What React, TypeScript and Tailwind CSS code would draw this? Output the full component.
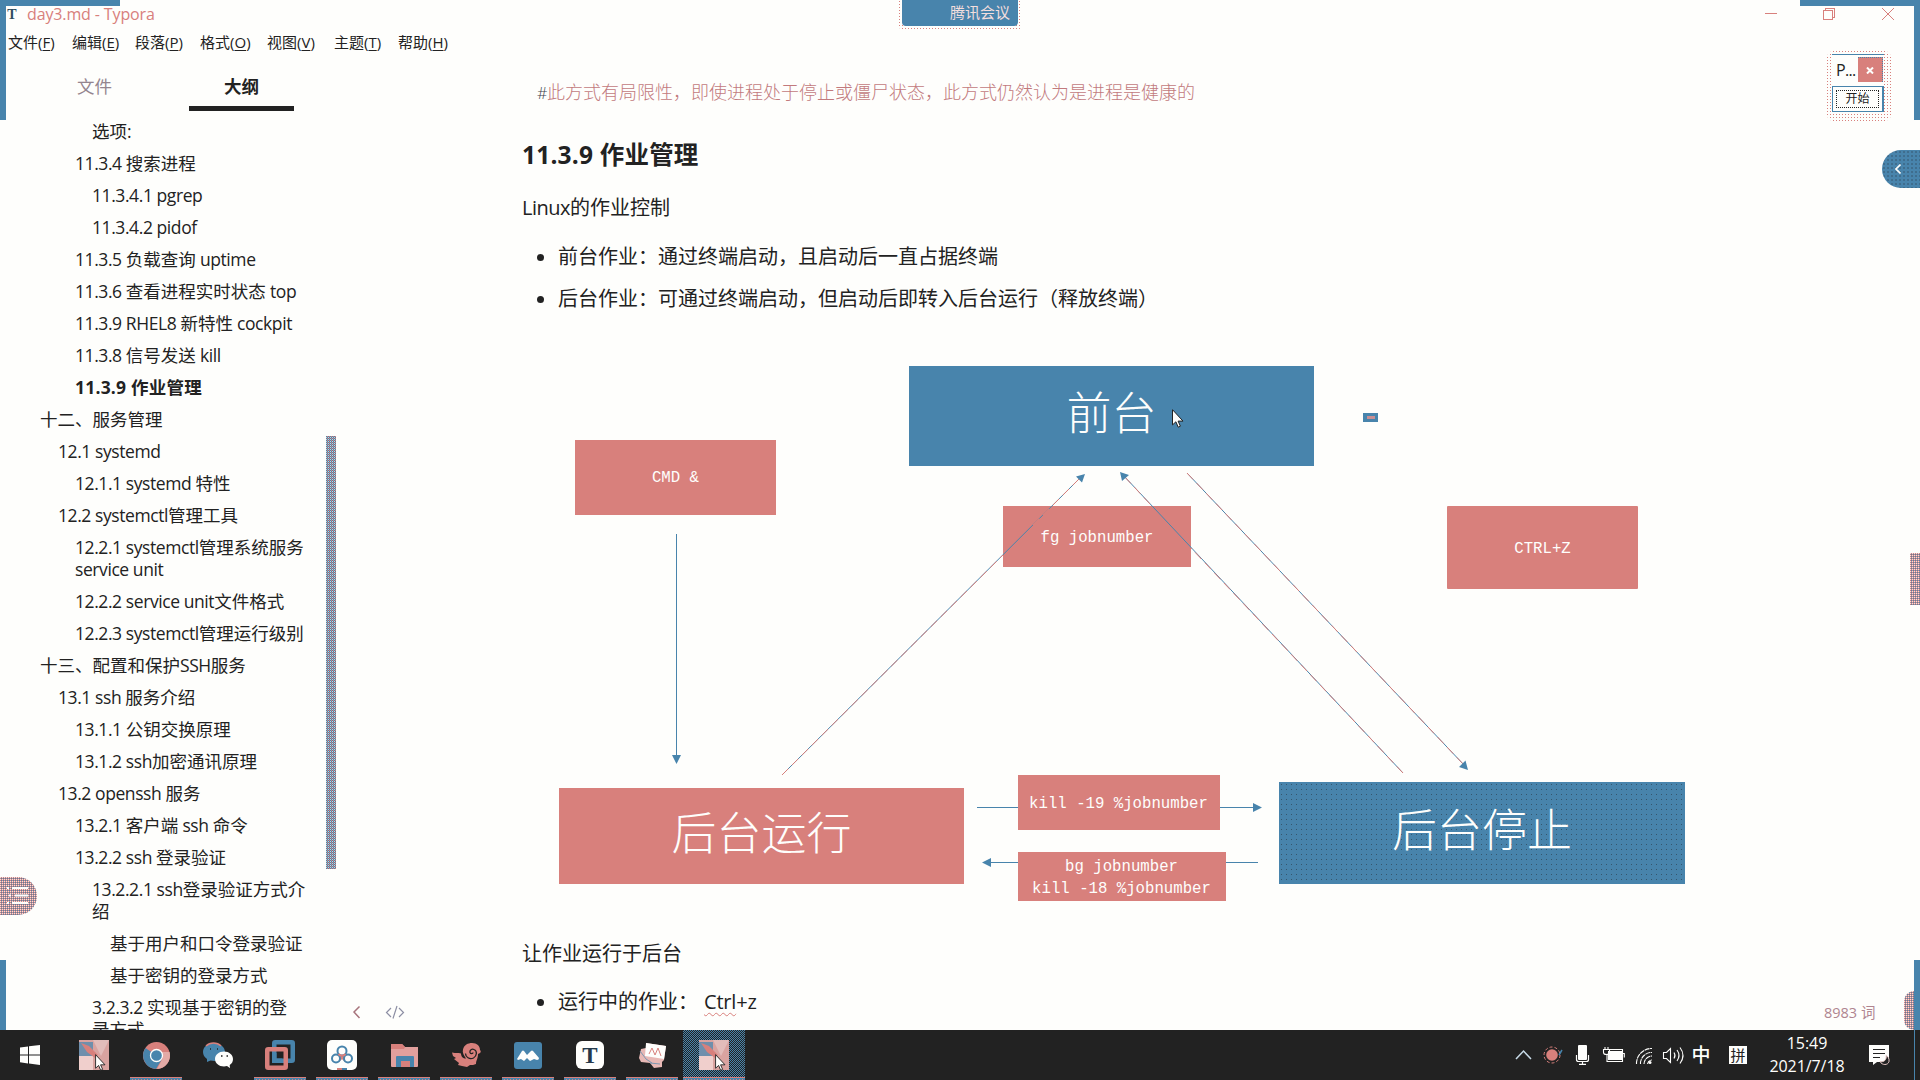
import React from "react";

/* Latin runs are set slightly tighter than the CJK runs around them. */
function Mixed({ text }: { text: string }) {
  const runs = text.match(/[\u3000-\uffff]+|[^\u3000-\uffff]+/g) ?? [];
  return (
    <>
      {runs.map((r, i) =>
        /[\u3000-\uffff]/.test(r) ? (
          <React.Fragment key={i}>{r}</React.Fragment>
        ) : (
          <span key={i} className="tracking-[-0.024em]">
            {r}
          </span>
        )
      )}
    </>
  );
}

const indent = ["pl-[40px]", "pl-[58px]", "pl-[75px]", "pl-[92px]", "pl-[110px]"];

const outline: { level: number; lines: string[]; active?: boolean }[] = [
  { level: 3, lines: ["选项:"] },
  { level: 2, lines: ["11.3.4 搜索进程"] },
  { level: 3, lines: ["11.3.4.1 pgrep"] },
  { level: 3, lines: ["11.3.4.2 pidof"] },
  { level: 2, lines: ["11.3.5 负载查询 uptime"] },
  { level: 2, lines: ["11.3.6 查看进程实时状态 top"] },
  { level: 2, lines: ["11.3.9 RHEL8 新特性 cockpit"] },
  { level: 2, lines: ["11.3.8 信号发送 kill"] },
  { level: 2, lines: ["11.3.9 作业管理"], active: true },
  { level: 0, lines: ["十二、服务管理"] },
  { level: 1, lines: ["12.1 systemd"] },
  { level: 2, lines: ["12.1.1 systemd 特性"] },
  { level: 1, lines: ["12.2 systemctl管理工具"] },
  { level: 2, lines: ["12.2.1 systemctl管理系统服务", "service unit"] },
  { level: 2, lines: ["12.2.2 service unit文件格式"] },
  { level: 2, lines: ["12.2.3 systemctl管理运行级别"] },
  { level: 0, lines: ["十三、配置和保护SSH服务"] },
  { level: 1, lines: ["13.1 ssh 服务介绍"] },
  { level: 2, lines: ["13.1.1 公钥交换原理"] },
  { level: 2, lines: ["13.1.2 ssh加密通讯原理"] },
  { level: 1, lines: ["13.2 openssh 服务"] },
  { level: 2, lines: ["13.2.1 客户端 ssh 命令"] },
  { level: 2, lines: ["13.2.2 ssh 登录验证"] },
  { level: 3, lines: ["13.2.2.1 ssh登录验证方式介", "绍"] },
  { level: 4, lines: ["基于用户和口令登录验证"] },
  { level: 4, lines: ["基于密钥的登录方式"] },
  { level: 3, lines: ["3.2.3.2 实现基于密钥的登", "录方式"] },
];

const menus = [
  { name: "文件", key: "F", w: "w-[64px]" },
  { name: "编辑", key: "E", w: "w-[63px]" },
  { name: "段落", key: "P", w: "w-[65px]" },
  { name: "格式", key: "O", w: "w-[67px]" },
  { name: "视图", key: "V", w: "w-[67px]" },
  { name: "主题", key: "T", w: "w-[64px]" },
  { name: "帮助", key: "H", w: "w-[64px]" },
];

const Pointer = ({ className }: { className: string }) => (
  <svg viewBox="0 0 12 19" className={className}>
    <path d="M.5.7v15.2l3.4-3.1 2.3 5.4 2.2-1-2.3-5.1h4.9z" fill="#fefefc" stroke="#222" strokeWidth="1" />
  </svg>
);

function TitleBar() {
  return (
    <div className="flex h-[29px] items-center text-[#d8807c]">
      <span className="ml-[7px] w-[10px] text-center font-['Liberation_Serif'] text-[14px] font-bold leading-[26px] text-[#2f4c60]">T</span>
      <span className="ml-[10px] text-[16px] leading-[29px] tracking-[-0.008em]">day3.md - Typora</span>
      <svg viewBox="0 0 140 20" className="ml-auto mr-[20px] h-[20px] w-[140px] -translate-y-px" fill="none" stroke="#d8807c" shapeRendering="crispEdges">
        <path d="M5 9.5h12M63.5 6.500h9v9h-9zM65.500 6V4.500h9v9H73" />
        <path d="M122 4l12 12M134 4l-12 12" shapeRendering="auto" />
      </svg>
    </div>
  );
}

function MenuBar() {
  return (
    <div className="flex h-[26px] items-center pl-[8px] text-[15px] leading-[26px]">
      {menus.map((m) => (
        <span key={m.key} className={m.w + " whitespace-nowrap"}>
          {m.name}
          <span>
            (<u className="underline-offset-2">{m.key}</u>)
          </span>
        </span>
      ))}
    </div>
  );
}

function Sidebar() {
  return (
    <aside className="flex h-full w-[337px] shrink-0 flex-col text-[17.500px]">
      <div className="flex h-[56px] shrink-0 leading-[62px]">
        <div className="w-[189px] pl-[77px] text-[#94858f]">文件</div>
        <div className="w-[105px] border-b-[5px] border-[#222] text-center font-bold">大纲</div>
      </div>
      <div className="flex min-h-0 flex-1">
        <div className="w-[326px] overflow-hidden pt-[4px]">
          {outline.map((o, i) => (
            <div key={i} className={indent[o.level] + " whitespace-nowrap py-[5px] leading-[22px]" + (o.active ? " font-bold tracking-[0.012em]" : "")}>
              {o.lines.map((l) => (
                <div key={l}>{o.active ? l : <Mixed text={l} />}</div>
              ))}
            </div>
          ))}
        </div>
        <div className="mt-[325px] h-[433px] w-[10px] bg-[conic-gradient(#d8807c_25%,#4884ac_0_50%,#d0cfd2_0_75%,#4884ac_0)] bg-[length:2px_2px]" />
      </div>
    </aside>
  );
}

const nodeBase = "absolute flex flex-col items-center justify-center whitespace-pre text-[#fefefc] ";
const small = "font-['Liberation_Mono',monospace] text-[15.700px] leading-[22px] pt-[2px] ";
const big = "text-[45px] font-light leading-[60px] ";

function Diagram() {
  return (
    <div className="relative h-[590px] w-[1200px]">
      <div className={nodeBase + big + "left-[386px] top-[46px] h-[100px] w-[405px] bg-[#4884ac] pb-[6px]"}>前台</div>
      <div className={nodeBase + small + "left-[52px] top-[120px] h-[75px] w-[201px] bg-[#d8807c] pb-[2px]"}>CMD &amp;</div>
      <div className={nodeBase + small + "left-[480px] top-[186px] h-[61px] w-[188px] bg-[#d8807c]"}>fg jobnumber</div>
      <div className={nodeBase + small + "left-[924px] top-[186px] h-[83px] w-[191px] rounded-[1px] bg-[#d8807c]"}>CTRL+Z</div>
      <div className={nodeBase + big + "left-[36px] top-[468px] h-[96px] w-[405px] bg-[#d8807c] pb-[6px]"}>后台运行</div>
      <div className={nodeBase + small + "left-[495px] top-[455px] h-[55px] w-[202px] bg-[#d8807c] pr-px"}>kill -19 %jobnumber</div>
      <div className={nodeBase + small + "left-[495px] top-[532px] h-[49px] w-[208px] bg-[#d8807c] pr-px"}>
        <span>bg jobnumber</span>
        <span>kill -18 %jobnumber</span>
      </div>
      <div
        className={
          nodeBase + big +
          "left-[756px] top-[462px] h-[102px] w-[406px] bg-[#4884ac] bg-[radial-gradient(circle_at_center,#35566c_0.5px,transparent_0.8px)] bg-[length:5px_5px] pb-[6px]"
        }
      >
        后台停止
      </div>
      <div className="absolute left-[840px] top-[93px] flex h-[9px] w-[15px] items-center justify-center bg-[#4884ac]">
        <div className="h-[3px] w-[8px] bg-[#c98f93]" />
      </div>
      <svg viewBox="523 320 1200 590" className="absolute inset-0 h-[590px] w-[1200px]" fill="none" stroke="#4884ac">
        <path d="M676.500 534V756M977 807.500h41M1220 807.500h34M1226 862.500h32M990 862.500h28" />
        <path d="M782 775L1081 477M1403 773L1123 475M1187 473L1465 766" />
        <path d="M782 775L1003 555M1033 525L1081 477M1403 773L1191 548M1150 504L1123 475M1187 473L1465 766" stroke="#d8807c" strokeDasharray="9 5" />
        <g fill="#4884ac" stroke="none">
          <path d="M672 755h9l-4.500 9zM1253 803v9l9-4.500zM991 858v9l-9-4.500z" />
          <path d="M1085 474l-9 2.500 6 6zM1120 472l2 9 7-6zM1468 770l-9-3 6.500-6.500z" />
        </g>
      </svg>
      <Pointer className="absolute left-[649px] top-[89px] h-[19px] w-[12px]" />
    </div>
  );
}

function Bullet({ children }: { children: React.ReactNode }) {
  return (
    <li className="flex h-[42px] items-center">
      <span className="ml-[15px] mr-[14px] h-[7px] w-[7px] rounded-full bg-[#222]" />
      <span className="whitespace-pre">{children}</span>
    </li>
  );
}

function Article() {
  return (
    <main className="h-full flex-1 overflow-hidden pl-[185px] text-[20px]">
      <div className="mt-[17px] h-[40px] pl-[15px] text-[18px] font-light leading-[40px] text-[#c27a7d]">
        <span className="inline-block w-[10px] text-[16px] text-[#3c3f4c]">#</span>
        此方式有局限性，即使进程处于停止或僵尸状态，此方式仍然认为是进程是健康的
      </div>
      <h4 className="mt-[22px] h-[42px] text-[24.500px] font-bold leading-[42px] tracking-[0.008em]">11.3.9 作业管理</h4>
      <p className="mt-[16px] h-[32px] leading-[32px]">
        <Mixed text="Linux的作业控制" />
      </p>
      <ul className="mt-[12px]">
        <Bullet>前台作业：通过终端启动，且启动后一直占据终端</Bullet>
        <Bullet>后台作业：可通过终端启动，但启动后即转入后台运行（释放终端）</Bullet>
      </ul>
      <div className="pl-px">
        <Diagram />
      </div>
      <p className="mt-[28px] h-[32px] leading-[32px]">让作业运行于后台</p>
      <ul className="mt-[11px]">
        <Bullet>
          运行中的作业：
          <span className="ml-[6px] tracking-[-0.01em]">
            <span className="underline decoration-[#d8807c] decoration-wavy decoration-1 underline-offset-3">Ctrl</span>+z
          </span>
        </Bullet>
      </ul>
    </main>
  );
}

function Thumb() {
  return (
    <span className="relative h-[30px] w-[30px]">
      <svg viewBox="0 0 30 30" className="h-[30px] w-[30px]">
        <path d="M0 0h30v30H0z" fill="#d9a3a0" />
        <path d="M0 2h14v14H0z" fill="#6f8fac" />
        <path d="M0 16h14v14H0z" fill="#f0cfcc" />
        <path d="M14 0h16L22 16z" fill="#e2bcba" />
        <path d="M2 3l8 3 9 9-3 3-8-6z" fill="#d8807c" />
      </svg>
      <Pointer className="absolute left-[16px] top-[14px] h-[17px] w-[11px]" />
    </span>
  );
}

const icons: React.ReactNode[] = [
  <svg viewBox="0 0 20 20" className="h-[20px] w-[20px]" fill="#fefefc">
    <path d="M0 2.600L8 1.500V9.400H0zM9 1.300L20 0v9.400H9zM0 10.400h8v8L0 17.300zM9 10.400h11V20L9 18.500z" />
  </svg>,
  <Thumb />,
  <svg viewBox="0 0 27 27" className="h-[27px] w-[27px]">
    <circle cx="13.500" cy="13.500" r="13.500" fill="#d8807c" />
    <path d="M13.500 13.500L2.500 6A13.500 13.500 0 0013 27l6-10z" fill="#4884ac" />
    <path d="M19 10h7.500A13.500 13.500 0 0114 27l6-11z" fill="#e3aaa6" />
    <circle cx="13.500" cy="13.500" r="6" fill="#4884ac" stroke="#fefefc" strokeWidth="1.300" />
  </svg>,
  <svg viewBox="0 0 30 26" className="h-[26px] w-[30px]">
    <path d="M10.500 1C4.500 1 0 5 0 10c0 3 1.500 5 4 7v3l3.500-1.500 4 .5C18 19 22 15 22 10S17 1 10.500 1z" fill="#4884ac" />
    <path d="M3 4c4-4 11-4 15 0" stroke="#d8807c" fill="none" strokeWidth="1.500" />
    <path d="M21 9.500c-5 0-9 3.300-9 7.500s4 7.500 9 7.500l3-.4 3 2-.3-3C29 21.500 30 19.500 30 17c0-4.200-4-7.500-9-7.500z" fill="#fefefc" />
    <path d="M7 7h1M14 7h1M18 14h1.500M23.500 14H25" stroke="#222" strokeWidth="1.500" />
  </svg>,
  <svg viewBox="0 0 30 30" className="h-[30px] w-[30px]" fill="none" strokeWidth="4.500">
    <rect x="9.250" y="2.250" width="18.500" height="18.500" rx="1" stroke="#4884ac" />
    <rect x="2.250" y="9.250" width="18.500" height="18.500" rx="1" stroke="#d8807c" />
    <path d="M9.250 13v7.750h8" stroke="#4884ac" />
  </svg>,
  <svg viewBox="0 0 30 30" className="h-[30px] w-[30px]" fill="none" strokeWidth="2">
    <rect width="30" height="30" rx="5" fill="#fefefc" />
    <path d="M11 14l8 7M19 14l-8 7" stroke="#d8807c" strokeWidth="2.500" />
    <circle cx="9" cy="18.500" r="4" stroke="#4884ac" fill="#fefefc" />
    <circle cx="21" cy="18.500" r="4" stroke="#4884ac" fill="#fefefc" />
    <circle cx="15" cy="11" r="4.500" stroke="#4884ac" fill="#fefefc" />
    <path d="M11.500 14a4.500 4.500 0 007 0" stroke="#d8807c" />
    <path d="M10 29h5" stroke="#d8807c" />
    <path d="M15 29h5" stroke="#4884ac" />
  </svg>,
  <svg viewBox="0 0 27 23" className="h-[23px] w-[27px]">
    <path d="M0 1q0-1 1-1h10l3 3h13v19q0 1-1 1H1q-1 0-1-1z" fill="#e2a09d" />
    <path d="M0 1q0-1 1-1h10l3 3-1 2H0z" fill="#d8807c" />
    <path d="M5 13q0-1 1-1h16q1 0 1 1v10h-4v-6h-9v6H5z" fill="#4884ac" />
    <path d="M10 17h9v6h-9z" fill="#d8807c" />
  </svg>,
  <svg viewBox="0 0 29 24" className="h-[24px] w-[29px]">
    <path d="M0 9.500c4 1 6 0 9 1 0 3 2 5 5 5-2-3-4-6-3-9C12 2 16 0 20 0c5 0 8 3 8 7 1 1 1 2 0 3l-2 1c0 5-2 6-2 10-2 1-4 1-6 1l-3 2-5-1-4-1 1-2-5-4 2-1-3-2z" fill="#d8807c" />
    <path d="M21 9.500c0 1.500-2.500 1.500-3 0-.7-2.500 2-4 4-3 3.500 1.500 3 6.500-.5 8.500-4 2-8-1-8-4.500" fill="none" stroke="#222" strokeWidth="1.300" />
  </svg>,
  <svg viewBox="0 0 28 27" className="h-[27px] w-[28px]">
    <rect width="28" height="27" rx="3" fill="#4884ac" />
    <path d="M3 17l5-8q1-1 2 0l3 4 4-4q1-1 2 0l6 7q0 2-2 2l-3-1-4 2-3-3-3 3-3-2-3 1z" fill="#fefefc" />
  </svg>,
  <span className="flex h-[28px] w-[28px] items-center justify-center rounded-[6px] bg-[#fefefc] font-['Liberation_Serif'] text-[23px] font-bold leading-none text-[#24384a]">T</span>,
  <svg viewBox="0 0 27 25" className="h-[25px] w-[27px]">
    <path d="M2 6l5-1V0l20 3-2 14-2 2v5l-8 1-4-5-9-1-2-4z" fill="#e8b9b6" />
    <path d="M7 0l20 3-2 13-19-3z" fill="#fefefc" />
    <path d="M10 11l3-6 3 7 3-7 3 8" stroke="#d8807c" fill="none" />
    <path d="M1 8l6 8 6 4M11 20l10 1" stroke="#7d97b0" fill="none" />
  </svg>,
  <Thumb />,
];

function Tray() {
  return (
    <div className="ml-auto flex h-full items-center text-[#fefefc]">
      <svg viewBox="0 0 176 24" className="h-[24px] w-[176px]" fill="none" stroke="#fefefc" strokeWidth="1.500">
        <path d="M1 16l7.500-8L16 16" stroke="#c8dbe8" />
        <circle cx="37" cy="12" r="8" stroke="#d8807c" strokeWidth="1" strokeDasharray="3 2" />
        <circle cx="37" cy="12" r="5.800" fill="#d8807c" stroke="none" />
        <path d="M44 12l3-5" stroke="#4884ac" />
        <rect x="63" y="2" width="9" height="15" rx="1" fill="#fefefc" stroke="none" />
        <path d="M61.500 12v4.500q0 2 2 2h8q2 0 2-2V12M67.500 18v3M64 21.300h7" strokeWidth="1.200" />
        <path d="M93 8h14v9H93z" fill="#fefefc" stroke="none" />
        <path d="M94 6.500h13.500v12H92V12M108 10.500h1.300v4M88.500 6.500h6v3q0 2-3 2t-3-2zM90 4v2M93 4v2" strokeWidth="1.100" />
        <g strokeWidth="1.100" strokeDasharray="5 .6">
          <path d="M121.500 21A15 15 0 01137 5.500M125.500 21A11 11 0 01137 9.500M129 21a8 8 0 018-8M132.500 21a5 5 0 014.500-4" />
        </g>
        <circle cx="135" cy="19.500" r="1.500" fill="#fefefc" stroke="none" />
        <path d="M148.500 9.500h3l4-4v14l-4-4h-3zM159 9.500q2 3 0 6M162 7q4 5.500 0 11M165 4.500q6 8 0 16" strokeWidth="1.100" />
      </svg>
      <span className="w-[20px] text-center text-[19px] font-medium leading-[48px]">中</span>
      <span className="ml-[18px] flex h-[18px] w-[18px] items-center justify-center bg-[#fefefc] text-[15px] leading-none text-[#222]">拼</span>
      <div className="ml-[13px] w-[94px] text-center text-[16px] leading-[23px] tracking-[-0.005em]">
        <div>15:49</div>
        <div>2021/7/18</div>
      </div>
      <svg viewBox="0 0 21 21" className="ml-[15px] mr-[30px] h-[21px] w-[21px]" fill="none">
        <path d="M0 0h20v17H8l-4 3v-3H0z" fill="#fefefc" />
        <path d="M4 4.500h12M4 8.500h12M4 12.500h7" stroke="#222" />
        <path d="M17 10.500c1 4-2 7-6 6 2 4 8 4 9 0 .5-3-1-5-3-6z" fill="#222" stroke="#e6c8c6" />
      </svg>
    </div>
  );
}

function Taskbar() {
  return (
    <footer className="flex h-[50px] bg-[#222]">
      {icons.map((icon, i) => (
        <div
          key={i}
          className={
            "relative flex h-full items-center justify-center " +
            (i === 0 ? "w-[60px] " : "w-[62px] ") +
            (i === 1 ? "ml-[3px] " : "") +
            (i === 11 ? "bg-[conic-gradient(#4884ac_25%,#222_0_50%,#4884ac_0_75%,#222_0)] bg-[length:2px_2px]" : "")
          }
        >
          {icon}
          {i > 1 && i !== 3 && (
            <span
              className={
                "absolute bottom-0 h-[3px] border-t border-[#d8807c] bg-[conic-gradient(#4884ac_25%,#d8807c_0_50%,#fefefc_0_75%,#4884ac_0)] bg-[length:3px_3px] " +
                (i === 11 ? "inset-x-0" : "inset-x-[5px]")
              }
            />
          )}
        </div>
      ))}
      <Tray />
    </footer>
  );
}

function Overlays() {
  return (
    <>
      <div className="absolute left-0 top-0 h-[6px] w-[120px] bg-[#4884ac]" />
      <div className="absolute left-0 top-0 h-[120px] w-[6px] bg-[#4884ac]" />
      <div className="absolute right-0 top-0 h-[6px] w-[120px] bg-[#4884ac]" />
      <div className="absolute right-0 top-0 h-[120px] w-[6px] bg-[#4884ac]" />
      <div className="absolute left-0 top-[960px] h-[70px] w-[6px] bg-[#4884ac]" />
      <div className="absolute right-0 top-[960px] h-[70px] w-[6px] bg-[#4884ac]" />
      <div className="absolute right-[5px] top-[1030px] h-[50px] w-px bg-[#4884ac]" />

      <div className="absolute left-[898px] top-0 flex h-[30px] w-[124px] justify-center rounded-b-[6px] bg-[radial-gradient(circle_at_center,#d8807c_0.7px,transparent_0.9px)] bg-[length:3px_3px]">
        <div className="h-[26px] w-[116px] rounded-b-[4px] bg-[#4884ac] pl-[48px] text-[15px] leading-[25px] text-[#f3dedd]">腾讯会议</div>
      </div>

      <div className="absolute left-[1826px] top-[50px] rounded-[10px] bg-[radial-gradient(circle_at_center,#d8807c_0.7px,transparent_0.9px)] bg-[length:3px_3px] pb-[10px] pl-[6px] pr-[8px] pt-[4px]">
        <div className="flex h-[32px] w-[52px] border-t border-[#4884ac] bg-[#fefefc]">
          <span className="w-[26px] pl-[4px] text-[16px] leading-[31px] tracking-[-0.04em]">P...</span>
          <span className="mt-[2px] flex h-[25px] w-[25px] items-center justify-center border-r border-t border-dotted border-[#4884ac] bg-[#d8807c]">
            <svg viewBox="0 0 8 7" className="h-[7px] w-[8px]" stroke="#fefefc" strokeWidth="2">
              <path d="M1 .5l6 6M7 .5l-6 6" />
            </svg>
          </span>
        </div>
        <div className="h-[26px] w-[52px] border border-r-2 border-[#4884ac] bg-[#fefefc] p-[3px]">
          <div className="h-[18px] border border-dotted border-[#222] text-center text-[12px] leading-[16px]">开始</div>
        </div>
      </div>

      <div className="absolute right-0 top-[150px] flex h-[38px] w-[38px] items-center rounded-l-full bg-[#4884ac] bg-[radial-gradient(circle_at_center,#2a3d4b_0.5px,transparent_0.8px)] bg-[length:4px_4px] pl-[13px]">
        <svg viewBox="0 0 6 10" className="h-[10px] w-[6px]" fill="none" stroke="#fefefc" strokeWidth="1.600">
          <path d="M5.500.5L1 5l4.500 4.500" />
        </svg>
      </div>

      <div className="absolute right-0 top-[553px] h-[52px] w-[10px] bg-[conic-gradient(#d8807c_25%,#4884ac_0_50%,#d8807c_0_75%,#e8e6e8_0)] bg-[length:2px_2px]" />
      <div className="absolute left-[1904px] top-[991px] h-[39px] w-[10px] rounded-l-[10px] bg-[conic-gradient(#d8807c_25%,#4884ac_0_50%,#d8807c_0_75%,#e8e6e8_0)] bg-[length:2px_2px]" />
      <div className="absolute left-0 top-[877px] h-[38px] w-[37px] rounded-r-full bg-[conic-gradient(#d8807c_25%,#4884ac_0_50%,#d8807c_0_75%,#e8e6e8_0)] bg-[length:2px_2px]">
        <svg viewBox="0 0 37 38" className="h-[38px] w-[37px]" stroke="#fefefc" strokeWidth="2">
          <path d="M12 11h16M15 18.500h13M12 26h16M7 11h2M9 18.500h2M7 26h2" />
        </svg>
      </div>

      <svg viewBox="0 0 54 16" className="absolute left-[352px] top-[1004px] h-[16px] w-[54px]" fill="none">
        <path d="M7.500 2.500L2 8l5.500 6" stroke="#a7747c" strokeWidth="1.500" />
        <path d="M39 4l-4.500 4.500L39 13M47 4l4.500 4.500L47 13M45 2l-4 12.500" stroke="#8d8fa4" strokeWidth="1.200" />
      </svg>
      <div className="absolute left-[1824px] top-[1000px] whitespace-nowrap text-[14.500px] leading-[26px] text-[#b08590]">8983 词</div>
    </>
  );
}

export default function App() {
  return (
    <div className="relative flex h-[1080px] w-[1920px] flex-col overflow-hidden bg-[#fefefc] font-['Open_Sans','Noto_Sans_CJK_SC',sans-serif] text-[#222]">
      <TitleBar />
      <MenuBar />
      <div className="flex min-h-0 flex-1">
        <Sidebar />
        <Article />
      </div>
      <Taskbar />
      <Overlays />
    </div>
  );
}
